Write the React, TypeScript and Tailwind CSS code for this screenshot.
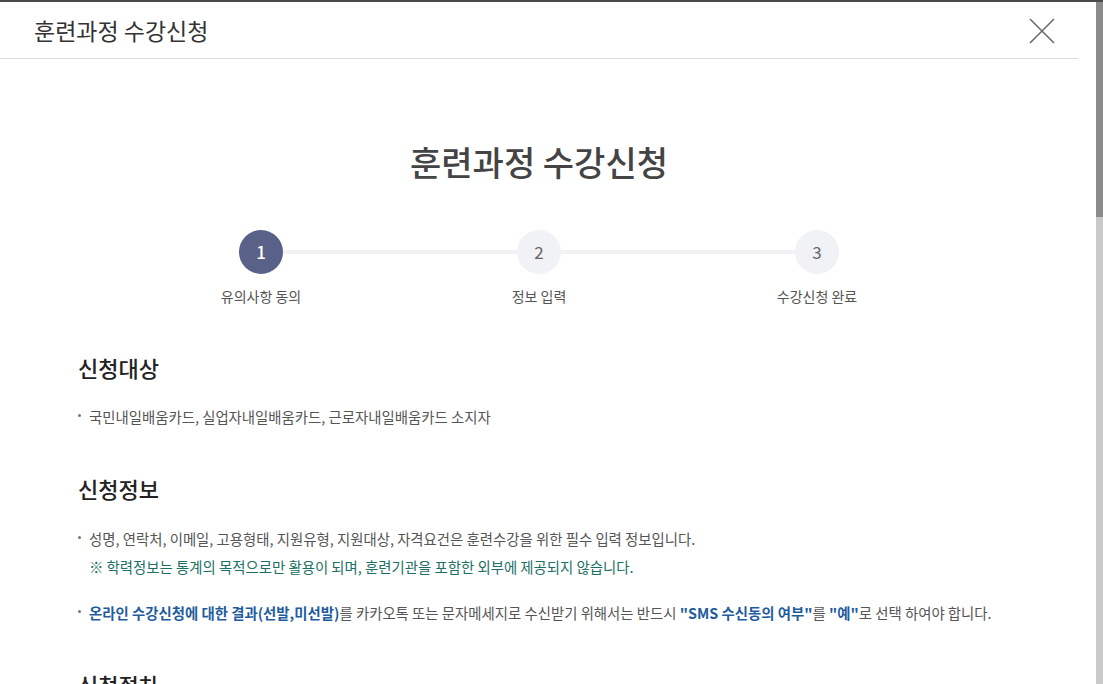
const FONT = "font-['Noto_Sans_CJK_KR','Noto_Sans',sans-serif]";

const STEPS = ["유의사항 동의", "정보 입력", "수강신청 완료"];

function Bullet({ children, className = "" }: { children: React.ReactNode; className?: string }) {
  return (
    <li className={`flex items-start ${className}`}>
      <span className="mr-[8px] h-[3px] w-[3px] shrink-0 rounded-full bg-[#777]" />
      <div>{children}</div>
    </li>
  );
}

export default function App() {
  return (
    <div className={`flex h-[684px] w-[1103px] overflow-hidden border-t-2 border-[#4a4a4a] bg-white ${FONT}`}>
      <div className="flex w-[1096px] flex-col">
        {/* Header */}
        <div className="flex h-[57px] w-[1078px] shrink-0 items-center justify-between border-b border-[#dedede] pl-[34px] pr-[22px]">
          <h1 className="text-[23px] leading-[30px] text-[#333]">훈련과정 수강신청</h1>
          <button aria-label="닫기" className="mt-[2px] flex h-[28px] w-[28px] items-center justify-center">
            <svg width="26" height="26" viewBox="0 0 26 26" fill="none" stroke="#6b6b6b" strokeWidth="1.6">
              <path d="M1 1L25 25M25 1L1 25" />
            </svg>
          </button>
        </div>

        {/* Body */}
        <div className="w-[1078px] shrink-0 pt-[81px]">
          <h2 className="text-center text-[34px] font-medium leading-[44px] text-[#444]">훈련과정 수강신청</h2>

          {/* Steps */}
          <div className="mx-auto mt-[46px] flex w-[600px] items-center">
            {[1, 2, 3].map((n) => (
              <div key={n} className={`flex items-center ${n < 3 ? "flex-1" : ""}`}>
                <div
                  className={`flex h-[44px] w-[44px] shrink-0 items-center justify-center rounded-full text-[17px] ${
                    n === 1 ? "bg-[#5a6189] font-medium text-white" : "bg-[#f1f2f6] text-[#666]"
                  }`}
                >
                  {n}
                </div>
                {n < 3 && <div className="h-[4px] flex-1 bg-[#f2f2f4]" />}
              </div>
            ))}
          </div>
          <div className="mx-auto mt-[12px] grid w-[834px] grid-cols-3">
            {STEPS.map((s) => (
              <div key={s} className="text-center text-[14px] leading-[20px] text-[#555]">
                {s}
              </div>
            ))}
          </div>

          {/* Sections */}
          <div className="pl-[78px] text-[14.4px] text-[#555]">
            <h3 className="mt-[46px] text-[22px] font-medium leading-[30px] text-[#222]">신청대상</h3>
            <ul className="mt-[24px] leading-[22px]">
              <Bullet className="[&>span]:mt-[8px]">국민내일배움카드, 실업자내일배움카드, 근로자내일배움카드 소지자</Bullet>
            </ul>

            <h3 className="mt-[45px] text-[22px] font-medium leading-[30px] text-[#222]">신청정보</h3>
            <ul className="mt-[22px] leading-[28px]">
              <Bullet className="[&>span]:mt-[11px]">
                <p>성명, 연락처, 이메일, 고용형태, 지원유형, 지원대상, 자격요건은 훈련수강을 위한 필수 입력 정보입니다.</p>
                <p className="text-[#1c6f64]">※ 학력정보는 통계의 목적으로만 활용이 되며, 훈련기관을 포함한 외부에 제공되지 않습니다.</p>
              </Bullet>
              <Bullet className="mt-[18px] [&>span]:mt-[11px]">
                <span className="font-bold text-[#1f5c9e]">온라인 수강신청에 대한 결과(선발,미선발)</span>를 카카오톡 또는
                문자메세지로 수신받기 위해서는 반드시 <span className="font-bold text-[#1f5c9e]">"SMS 수신동의 여부"</span>를{" "}
                <span className="font-bold text-[#1f5c9e]">"예"</span>로 선택 하여야 합니다.
              </Bullet>
            </ul>

            <h3 className="mt-[42px] text-[22px] font-medium leading-[30px] text-[#222]">신청절차</h3>
          </div>
        </div>
      </div>

      {/* Scrollbar */}
      <div className="flex w-[7px] flex-col bg-[#c9c9c9]">
        <div className="h-[215px] bg-[#8a8a8a]" />
      </div>
    </div>
  );
}
